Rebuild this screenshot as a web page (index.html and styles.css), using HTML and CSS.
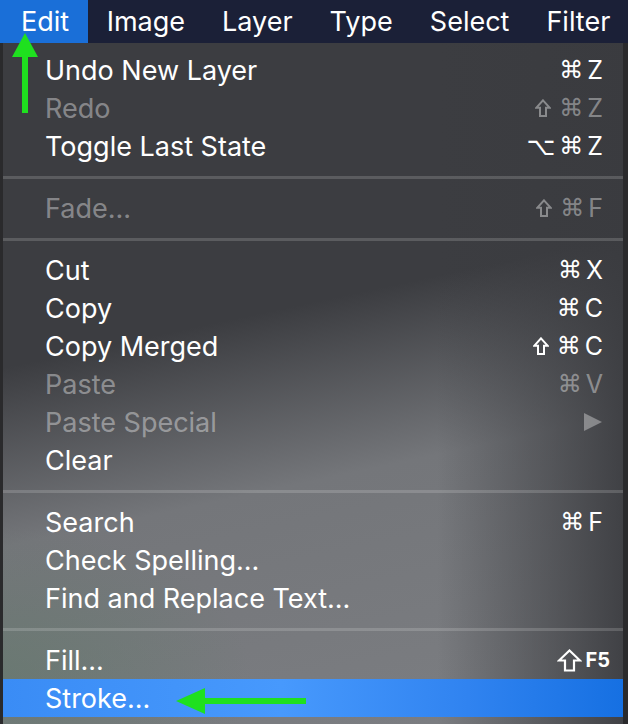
FILE: index.html
```html
<!DOCTYPE html>
<html>
<head>
<meta charset="utf-8">
<link rel="stylesheet" href="styles.css">
</head>
<body>
<div class="screen">
  <nav class="menubar">
    <span class="mb-item active">Edit</span>
    <span class="mb-item">Image</span>
    <span class="mb-item">Layer</span>
    <span class="mb-item">Type</span>
    <span class="mb-item">Select</span>
    <span class="mb-item">Filter</span>
  </nav>
  <div class="menu">
    <div class="row"><span class="label">Undo New Layer</span><span class="keys"><span class="sym cmd">⌘</span><span class="k">Z</span></span></div>
    <div class="row disabled"><span class="label">Redo</span><span class="keys"><svg class="shift" width="16" height="18" viewBox="0 0 16 18"><path d="M8 1.3 L14.8 8.8 L11 8.8 L11 16.9 L5 16.9 L5 8.8 L1.2 8.8 Z" fill="none" stroke="currentColor" stroke-width="2"/></svg><span class="sym cmd">⌘</span><span class="k">Z</span></span></div>
    <div class="row"><span class="label">Toggle Last State</span><span class="keys"><span class="sym opt">⌥</span><span class="sym cmd">⌘</span><span class="k">Z</span></span></div>
    <div class="sep"></div>
    <div class="row disabled"><span class="label">Fade...</span><span class="keys"><svg class="shift" width="16" height="18" viewBox="0 0 16 18"><path d="M8 1.3 L14.8 8.8 L11 8.8 L11 16.9 L5 16.9 L5 8.8 L1.2 8.8 Z" fill="none" stroke="currentColor" stroke-width="2"/></svg><span class="sym cmd">⌘</span><span class="k">F</span></span></div>
    <div class="sep"></div>
    <div class="row"><span class="label">Cut</span><span class="keys"><span class="sym cmd">⌘</span><span class="k">X</span></span></div>
    <div class="row"><span class="label">Copy</span><span class="keys"><span class="sym cmd">⌘</span><span class="k">C</span></span></div>
    <div class="row"><span class="label">Copy Merged</span><span class="keys"><svg class="shift" width="16" height="18" viewBox="0 0 16 18"><path d="M8 1.3 L14.8 8.8 L11 8.8 L11 16.9 L5 16.9 L5 8.8 L1.2 8.8 Z" fill="none" stroke="currentColor" stroke-width="2"/></svg><span class="sym cmd">⌘</span><span class="k">C</span></span></div>
    <div class="row disabled"><span class="label">Paste</span><span class="keys"><span class="sym cmd">⌘</span><span class="k">V</span></span></div>
    <div class="row disabled"><span class="label">Paste Special</span><span class="keys"><span class="submenu"></span></span></div>
    <div class="row"><span class="label">Clear</span></div>
    <div class="sep"></div>
    <div class="row"><span class="label">Search</span><span class="keys"><span class="sym cmd">⌘</span><span class="k">F</span></span></div>
    <div class="row"><span class="label">Check Spelling...</span></div>
    <div class="row"><span class="label">Find and Replace Text...</span></div>
    <div class="sep"></div>
    <div class="row"><span class="label">Fill...</span><span class="keys fkeys"><svg class="shift big" width="25" height="23" viewBox="0 0 25 23"><path d="M12.5 1.5 L23 11.5 L17 11.5 L17 21.5 L8 21.5 L8 11.5 L2 11.5 Z" fill="none" stroke="currentColor" stroke-width="2.2"/></svg><span class="k small">F5</span></span></div>
    <div class="row selected"><span class="label">Stroke...</span></div>
  </div>
  <svg class="arrow-up" width="26" height="82" viewBox="0 0 26 82">
    <polygon points="13,0 26,24 0,24" fill="#1fe01f"/>
    <rect x="10" y="23" width="6" height="57" fill="#1fe01f"/>
  </svg>
  <svg class="arrow-left" width="132" height="26" viewBox="0 0 132 26">
    <polygon points="0,13 29,0 29,26" fill="#1fe01f"/>
    <rect x="28" y="10" width="102" height="6" fill="#1fe01f"/>
  </svg>
</div>
</body>
</html>
```

FILE: styles.css
```css
html, body {
  margin: 0;
  padding: 0;
  background: #2a2a2c;
}

.screen {
  position: relative;
  width: 628px;
  height: 724px;
  overflow: hidden;
  font-family: "Inter", "Roboto", "Liberation Sans", sans-serif;
  color: #ffffff;
}

.menubar {
  display: flex;
  height: 43px;
  background: #1b2037;
  align-items: stretch;
}

.mb-item {
  display: flex;
  align-items: center;
  padding: 0 18.5px;
  font-size: 27px;
  line-height: 1;
  color: #ffffff;
}

.mb-item.active {
  background: #1a6fd8;
  padding-left: 21px;
  padding-right: 19px;
}

.menu {
  margin-left: 3px;
  width: 620px;
  height: 681px;
  padding-top: 8px;
  box-sizing: border-box;
  background:
    linear-gradient(to right, rgba(58,59,63,0) 0%, rgba(58,59,63,0) 70%, rgba(58,59,63,0.9) 100%),
    radial-gradient(ellipse 40% 22% at 0% 93%, rgba(95,120,105,0.55) 0%, rgba(95,120,105,0) 100%),
    linear-gradient(168deg, #3c3d41 0%, #3c3d41 40%, #74767a 62%, #7c7e82 100%);
}

.row {
  display: flex;
  align-items: center;
  justify-content: space-between;
  height: 38px;
  padding: 0 20px 0 42px;
  font-size: 27px;
  line-height: 1;
  color: #ffffff;
}

.row.disabled {
  color: rgba(255,255,255,0.4);
}

.row.selected {
  background: linear-gradient(to right, #3a8cf5 0%, #4799fd 45%, #3083f0 75%, #1670e2 100%);
}

.keys {
  display: flex;
  align-items: center;
}

.sym {
  font-family: "DejaVu Sans", sans-serif;
  font-size: 24px;
}

.sym.cmd {
  margin-right: 4px;
}

.sym.opt {
  font-size: 25px;
  margin-right: 4px;
}

.shift {
  display: block;
  margin-right: 8px;
}

.shift.big {
  margin-right: 3px;
}

.k {
  font-size: 25px;
}

.k.small {
  font-size: 20px;
  font-weight: 700;
}

.fkeys {
  margin-right: -7px;
}

.submenu {
  width: 0;
  height: 0;
  border-top: 9.5px solid transparent;
  border-bottom: 9.5px solid transparent;
  border-left: 18px solid rgba(255,255,255,0.35);
  margin-right: 1px;
}

.sep {
  height: 24px;
  display: flex;
  align-items: center;
}

.sep::before {
  content: "";
  display: block;
  width: 100%;
  height: 3px;
  background: rgba(255,255,255,0.16);
}

.arrow-up {
  position: absolute;
  left: 12px;
  top: 33px;
}

.arrow-left {
  position: absolute;
  left: 176px;
  top: 688px;
}
```
